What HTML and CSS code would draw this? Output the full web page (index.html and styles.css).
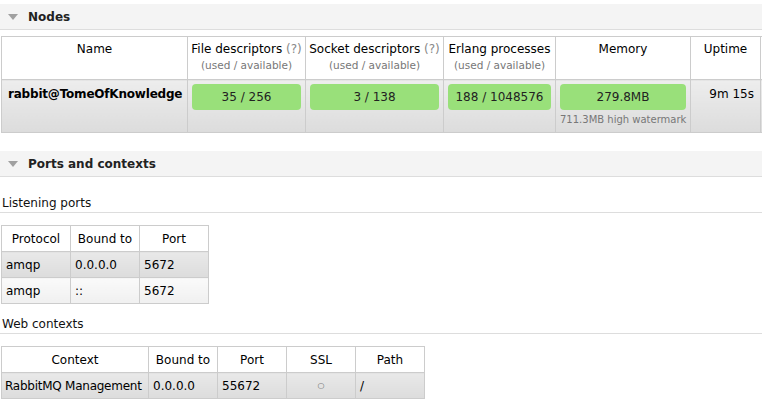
FILE: index.html
```html
<!DOCTYPE html>
<html>
<head>
<meta charset="utf-8">
<link rel="stylesheet" href="styles.css">
</head>
<body>
<div class="page">
  <div class="section-head"><span class="tri"></span><span class="section-title">Nodes</span></div>
  <div class="nodes-wrap">
    <table class="grid nodes">
      <colgroup>
        <col class="k1"><col class="k2"><col class="k3"><col class="k4"><col class="k5"><col class="k6"><col class="k7">
      </colgroup>
      <thead>
        <tr>
          <th>Name</th>
          <th>File descriptors <span class="help">(?)</span><div class="sub">(used / available)</div></th>
          <th>Socket descriptors <span class="help">(?)</span><div class="sub">(used / available)</div></th>
          <th>Erlang processes<div class="sub">(used / available)</div></th>
          <th>Memory</th>
          <th>Uptime</th>
          <th></th>
        </tr>
      </thead>
      <tbody>
        <tr class="node-row">
          <td class="name">rabbit@TomeOfKnowledge</td>
          <td><div class="bar">35 / 256</div></td>
          <td><div class="bar">3 / 138</div></td>
          <td><div class="bar">188 / 1048576</div></td>
          <td><div class="bar">279.8MB</div><div class="wm">711.3MB high watermark</div></td>
          <td class="uptime">9m 15s</td>
          <td></td>
        </tr>
      </tbody>
    </table>
  </div>

  <div class="section-head second"><span class="tri"></span><span class="section-title">Ports and contexts</span></div>

  <h3 class="sub-head">Listening ports</h3>
  <table class="grid small ports">
    <thead>
      <tr><th class="c1">Protocol</th><th class="c2">Bound to</th><th class="c3">Port</th></tr>
    </thead>
    <tbody>
      <tr class="alt1"><td>amqp</td><td>0.0.0.0</td><td>5672</td></tr>
      <tr class="alt2"><td>amqp</td><td>::</td><td>5672</td></tr>
    </tbody>
  </table>

  <h3 class="sub-head web">Web contexts</h3>
  <table class="grid small ctx">
    <thead>
      <tr><th class="w1">Context</th><th class="w2">Bound to</th><th class="w3">Port</th><th class="w4">SSL</th><th class="w5">Path</th></tr>
    </thead>
    <tbody>
      <tr class="alt1"><td class="ctxname">RabbitMQ Management</td><td>0.0.0.0</td><td>55672</td><td class="center">○</td><td>/</td></tr>
    </tbody>
  </table>
</div>
</body>
</html>
```

FILE: styles.css
```css
html, body {
  margin: 0;
  padding: 0;
  background: #fff;
}
body {
  font-family: "DejaVu Sans", Verdana, sans-serif;
  font-size: 12px;
  color: #000;
  overflow: hidden;
  width: 762px;
  height: 406px;
}
.page {
  padding-top: 4px;
}
.section-head {
  display: flex;
  align-items: center;
  height: 25px;
  background: #f4f4f4;
  border-bottom: 1px solid #ddd;
}
.section-head.second {
  margin-top: 18px;
}
.tri {
  width: 0;
  height: 0;
  border-left: 5px solid transparent;
  border-right: 5px solid transparent;
  border-top: 6px solid #a0a0a0;
  margin-left: 8px;
  margin-right: 10px;
}
.section-title {
  font-weight: bold;
  font-size: 12px;
  color: #222;
}
.nodes-wrap {
  margin-top: 6px;
  padding-left: 1px;
  width: 900px;
}
.grid {
  border-collapse: collapse;
  table-layout: fixed;
}
.grid th, .grid td {
  border: 1px solid #ccc;
}
.grid th {
  font-weight: normal;
  background: #fff;
}
.nodes {
  width: 819px;
}
.k1 { width: 186px; }
.k2 { width: 118px; }
.k3 { width: 138px; }
.k4 { width: 112px; }
.k5 { width: 135px; }
.k6 { width: 70px; }
.k7 { width: 60px; }
.nodes th {
  height: 37px;
  vertical-align: top;
  padding: 5px 0 0 0;
  text-align: center;
  white-space: nowrap;
  overflow: hidden;
}
.help {
  color: #888;
}
.sub {
  font-size: 10.5px;
  color: #777;
  margin-top: 3px;
}
.node-row td {
  background: linear-gradient(#ededed, #dcdcdc);
  height: 45px;
  vertical-align: top;
  padding: 0;
}
.node-row td.name {
  font-weight: bold;
  padding: 7px 0 0 6px;
  white-space: nowrap;
  letter-spacing: -0.2px;
}
.bar {
  margin: 4px 4px 0 4px;
  height: 26px;
  line-height: 26px;
  background: #99e07a;
  border-radius: 4px;
  text-align: center;
  color: #222;
  white-space: nowrap;
}
.wm {
  font-size: 10px;
  color: #777;
  padding-left: 4px;
  margin-top: 4px;
  white-space: nowrap;
}
.node-row td.uptime {
  text-align: right;
  padding: 7px 6px 0 0;
}
.sub-head {
  font-weight: normal;
  font-size: 12px;
  margin: 19px 0 0 0;
  padding: 0 0 2px 2px;
  border-bottom: 1px solid #ddd;
  color: #111;
  line-height: 14px;
}
.sub-head.web {
  margin-top: 13px;
}
.small {
  margin: 12px 0 0 1px;
}
.small th, .small td {
  height: 25px;
  padding: 0 4px;
  white-space: nowrap;
}
.small th {
  text-align: center;
}
.small td {
  text-align: left;
}
.small td.ctxname {
  padding: 0 3px;
  letter-spacing: -0.25px;
}
.small td.center {
  text-align: center;
  color: #666;
  font-size: 8px;
}
.alt1 td {
  background: linear-gradient(#e9e9e9, #dcdcdc);
}
.alt2 td {
  background: linear-gradient(#fafafa, #f0f0f0);
}
.ports .c1, .ports .c2, .ports .c3 {
  width: 60px;
}
.ctx .w1 { width: 138px; }
.ctx .w2, .ctx .w3, .ctx .w4, .ctx .w5 { width: 60px; }
```
